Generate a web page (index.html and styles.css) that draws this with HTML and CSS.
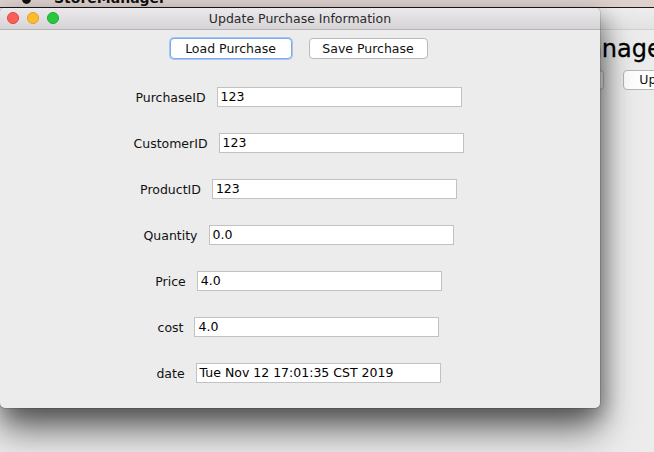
FILE: index.html
```html
<!DOCTYPE html>
<html>
<head>
<meta charset="utf-8">
<link rel="stylesheet" href="styles.css">
</head>
<body>
<div class="desktop">
  <div class="menubar"><span class="apple"></span><span class="appname">StoreManager</span></div>

  <div class="bgwin">
    <div class="bg-titlebar"></div>
    <div class="bg-content">
      <div class="bg-heading">StoreManager</div>
      <div class="bg-buttons">
        <span class="bg-btn bg-btn-a">Delete</span>
        <span class="bg-btn bg-btn-b">Update</span>
      </div>
    </div>
  </div>

  <div class="window">
    <div class="titlebar">
      <div class="lights">
        <span class="light red"></span>
        <span class="light yellow"></span>
        <span class="light green"></span>
      </div>
      <div class="title">Update Purchase Information</div>
    </div>
    <div class="content">
      <div class="actions">
        <button class="btn btn-focus">Load Purchase</button>
        <button class="btn">Save Purchase</button>
      </div>
      <div class="form">
        <div class="row"><label>PurchaseID</label><div class="field">123</div></div>
        <div class="row"><label>CustomerID</label><div class="field">123</div></div>
        <div class="row"><label>ProductID</label><div class="field">123</div></div>
        <div class="row"><label>Quantity</label><div class="field">0.0</div></div>
        <div class="row"><label>Price</label><div class="field">4.0</div></div>
        <div class="row"><label>cost</label><div class="field">4.0</div></div>
        <div class="row"><label>date</label><div class="field">Tue Nov 12 17:01:35 CST 2019</div></div>
      </div>
    </div>
  </div>
</div>
</body>
</html>
```
FILE: styles.css
```css
* { box-sizing: border-box; }
html, body { margin: 0; padding: 0; }
body {
  width: 654px;
  height: 452px;
  overflow: hidden;
  background: #e6e6e6;
  font-family: "DejaVu Sans", sans-serif;
  color: #111;
}
.desktop {
  position: relative;
  width: 654px;
  height: 452px;
  overflow: hidden;
}
.menubar {
  height: 8px;
  background: #ded1cd;
  border-bottom: 1px solid #1c1c1c;
  position: relative;
  overflow: hidden;
}
.apple {
  position: absolute;
  left: 22px;
  top: -6px;
  width: 9px;
  height: 10px;
  border-radius: 50%;
  background: #111;
}
.appname {
  position: absolute;
  left: 54px;
  top: -10px;
  font-weight: bold;
  font-size: 14px;
  color: #111;
}

/* background window */
.bgwin {
  position: absolute;
  left: 0;
  top: 8px;
  width: 760px;
  height: 460px;
  background: #ececec;
}
.bg-titlebar {
  height: 22px;
  background: linear-gradient(#eeeeee, #e2e2e2);
  border-bottom: 1px solid #d0d0d0;
}
.bg-content {
  padding-left: 503px;
  padding-top: 4px;
}
.bg-heading {
  font-size: 24px;
  line-height: 30px;
  color: #000;
  -webkit-text-stroke: 0.3px #000;
}
.bg-buttons {
  display: flex;
  gap: 19px;
  margin-top: 6px;
  padding-left: 23px;
}
.bg-btn {
  height: 20px;
  width: 78px;
  border: 1px solid #b8b8b8;
  border-radius: 4px;
  background: #fff;
  font-size: 12.5px;
  line-height: 18px;
  text-align: center;
}

/* front window */
.window {
  position: absolute;
  left: 0;
  top: 8px;
  width: 600px;
  height: 400px;
  background: #ececec;
  border-radius: 5px;
  box-shadow: 0 0 0 1px rgba(0,0,0,0.12), 0 22px 36px rgba(0,0,0,0.55), 4px 8px 20px rgba(0,0,0,0.28);
  overflow: hidden;
}
.titlebar {
  height: 22px;
  position: relative;
  background: linear-gradient(#ebe9eb, #d6d4d6);
  border-bottom: 1px solid #b6b6b6;
  display: flex;
  align-items: center;
  justify-content: center;
}
.lights {
  position: absolute;
  left: 7px;
  top: 4px;
  display: flex;
  gap: 8px;
}
.light {
  width: 12px;
  height: 12px;
  border-radius: 50%;
}
.red { background: #fc5f57; border: 1px solid #e1443e; }
.yellow { background: #fdbc2e; border: 1px solid #dea123; }
.green { background: #28c840; border: 1px solid #1ea92f; }
.title {
  font-size: 12.5px;
  color: #2a2a2a;
}

.content {
  padding-right: 3px;
}
.actions {
  display: flex;
  justify-content: center;
  gap: 17px;
  padding-top: 8px;
}
.btn {
  height: 21px;
  padding: 0;
  background: #fff;
  border: 1px solid #b9b9b9;
  border-radius: 4px;
  font-family: "DejaVu Sans", sans-serif;
  font-size: 12.5px;
  color: #111;
  width: 119px;
}
.btn-focus {
  width: 122px;
  border: 1px solid #7fa9ea;
  box-shadow: 0 0 0 1px #a8c6f3;
}
.form {
  display: flex;
  flex-direction: column;
  gap: 26px;
  padding-top: 28px;
}
.row {
  display: flex;
  justify-content: center;
  align-items: center;
  gap: 11px;
  height: 20px;
}
.row label {
  font-size: 12.5px;
  color: #111;
}
.field {
  width: 245px;
  height: 20px;
  background: #fff;
  border: 1px solid #c2c2c2;
  font-size: 12.5px;
  line-height: 18px;
  padding-left: 3px;
  color: #000;
}
```
